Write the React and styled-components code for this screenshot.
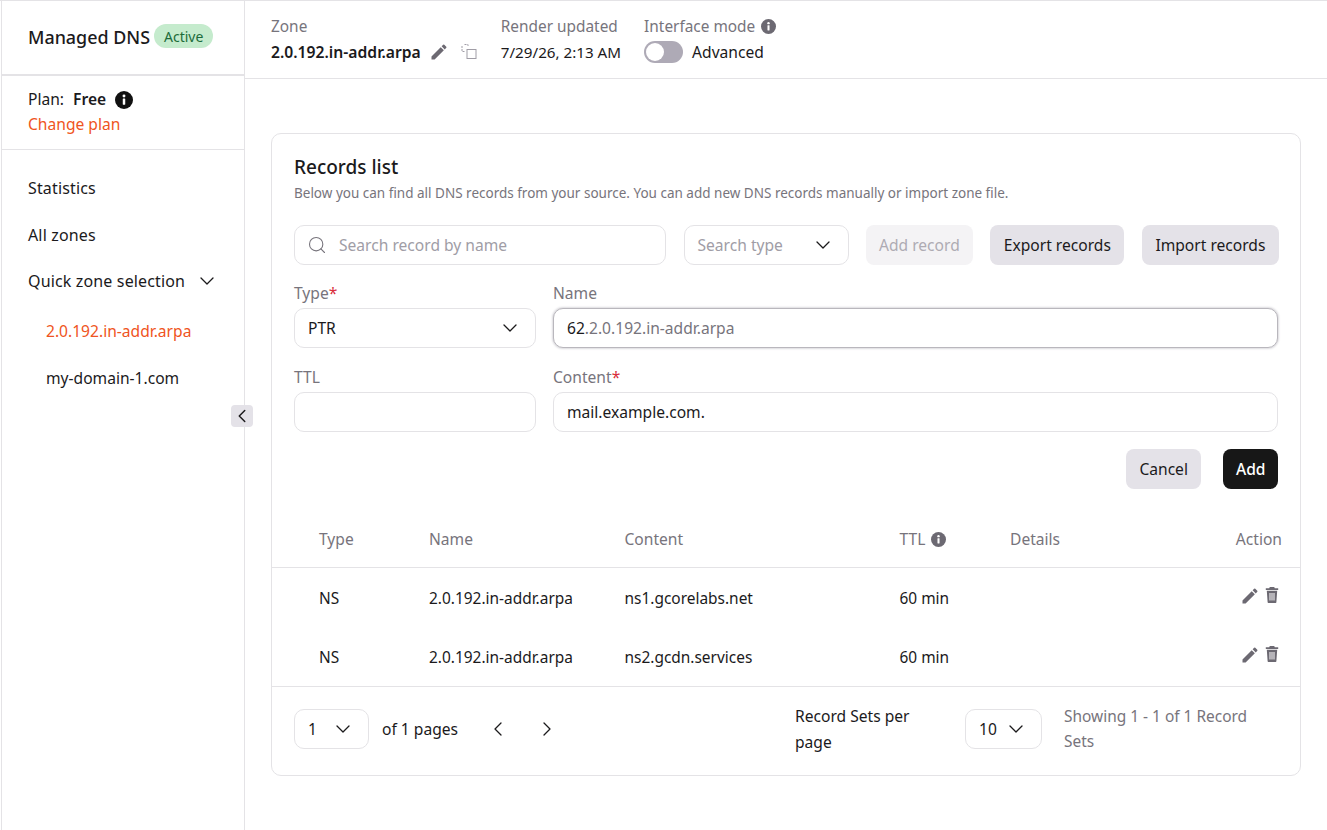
import React from 'react';
import styled, {createGlobalStyle} from 'styled-components';
import {ChevronDown, ChevronLeft, ChevronRight, Search} from 'lucide-react';

const GlobalStyle = createGlobalStyle`
    html, body {
        margin: 0;
        padding: 0;
        background: #fff;
        font-family: "Noto Sans", "Open Sans", sans-serif;
        font-size: 15.6px;
        color: #1b1a1c;
    }
    * {
        box-sizing: border-box;
    }
`

const Page = styled.div`
    display: flex;
    width: 1327px;
    height: 830px;
    border-top: 1px solid #e4e3e6;
    overflow: hidden;
`

const Sidebar = styled.aside`
    position: relative;
    width: 244px;
    flex: none;
    margin-left: 1px;
    border-left: 1px solid #e4e3e6;
    border-right: 1px solid #e4e3e6;
`

const SideHeader = styled.div`
    display: flex;
    align-items: center;
    gap: 4px;
    height: 75px;
    padding: 0 0 2px 26px;
    border-bottom: 2px solid #e4e3e6;
`

const Brand = styled.span`
    font-size: 17.9px;
    font-weight: 500;
`

const Badge = styled.span`
    display: inline-flex;
    align-items: center;
    height: 24px;
    padding: 0 10px;
    border-radius: 12px;
    background: #c5ebcd;
    color: #1c6b3a;
    font-size: 14px;
    margin-top: -1px;
`

const PlanBlock = styled.div`
    height: 74px;
    padding: 11px 0 0 26px;
    border-bottom: 1px solid #e4e3e6;
    line-height: 25px;
`

const PlanRow = styled.div`
    display: flex;
    align-items: center;
    gap: 9px;
    strong {
        font-weight: 600;
    }
`

const OrangeLink = styled.a`
    color: #ef5422;
    display: block;
`

const Nav = styled.nav`
    display: flex;
    flex-direction: column;
    padding-top: 15px;
`

const NavItem = styled.a`
    display: flex;
    align-items: center;
    gap: 10px;
    height: 46.5px;
    padding-left: 26px;
    font-size: 16px;
    letter-spacing: .15px;
`

const SubList = styled.div`
    display: flex;
    flex-direction: column;
    padding-top: 3px;
`

const SubItem = styled.a`
    display: flex;
    align-items: center;
    height: 47px;
    padding-left: 44px;
    color: ${p => p.$active ? '#ef5422' : '#1b1a1c'};
`

const Collapse = styled.button`
    position: absolute;
    right: -9px;
    top: 404px;
    width: 22px;
    height: 22px;
    padding: 0;
    border: 0;
    border-radius: 4px;
    background: #e4e2e8;
    color: #1b1a1c;
    display: flex;
    align-items: center;
    justify-content: center;
`

const Main = styled.main`
    flex: 1;
    min-width: 0;
`

const TopBar = styled.header`
    display: flex;
    height: 78px;
    padding: 14px 0 0 26px;
    border-bottom: 1px solid #e4e3e6;
`

const TopGroup = styled.div`
    margin-right: ${p => p.$gap || 0}px;
`

const TopLabel = styled.div`
    display: flex;
    align-items: center;
    gap: 6px;
    height: 23px;
    color: #77747c;
    font-size: 15.4px;
`

const TopValue = styled.div`
    display: flex;
    align-items: center;
    height: 27px;
    font-size: ${p => p.$size || 15.6}px;
    font-weight: ${p => p.$bold ? 600 : 400};
    white-space: nowrap;
`

const ZoneTools = styled.span`
    display: flex;
    align-items: center;
    gap: 12px;
    margin-left: 8px;
`

const Toggle = styled.span`
    position: relative;
    display: inline-block;
    width: 39px;
    height: 22px;
    border-radius: 11px;
    background: #aeaab6;
    margin-right: 9px;
    &::after {
        content: "";
        position: absolute;
        left: 2px;
        top: 2px;
        width: 18px;
        height: 18px;
        border-radius: 50%;
        background: #fff;
    }
`

const Card = styled.section`
    width: 1030px;
    height: 643px;
    margin: 54px 0 0 26px;
    border: 1px solid #e4e3e6;
    border-radius: 10px;
`

const CardHead = styled.div`
    padding: 20px 22px 0;
    height: 91px;
    h2 {
        margin: 0;
        font-size: 19px;
        line-height: 26px;
        font-weight: 500;
    }
    p {
        margin: 4px 0 0;
        font-size: 13.5px;
        line-height: 18px;
        color: #77747c;
    }
`

const Toolbar = styled.div`
    display: flex;
    padding: 0 22px;
    gap: 17.5px;
`

const Field = styled.div`
    display: flex;
    align-items: center;
    justify-content: ${p => p.$start ? 'flex-start' : 'space-between'};
    flex: ${p => p.$width ? 'none' : '1 0 auto'};
    width: ${p => p.$width ? `${p.$width}px` : 'auto'};
    height: 40px;
    padding: 0 13px;
    background: #fff;
    border: 1px solid ${p => p.$focus ? '#b9b7bd' : '#e4e3e6'};
    border-radius: 10px;
    box-shadow: ${p => p.$focus ? '0 0 2px 1px #dcdbdf' : 'none'};
    color: ${p => p.$muted ? '#a09da6' : '#1b1a1c'};
    white-space: nowrap;
`

const SearchField = styled(Field)`
    justify-content: flex-start;
    gap: 12px;
    padding-left: 12px;
`

const Btn = styled.button`
    height: 40px;
    padding: 0 ${p => p.$pad || 13}px;
    border: 0;
    border-radius: 8px;
    font-family: inherit;
    font-size: 15.6px;
    background: ${p => p.$dark ? '#171717' : p.$off ? '#f4f3f5' : '#e4e2e8'};
    color: ${p => p.$dark ? '#fff' : p.$off ? '#aeabb3' : '#1b1a1c'};
    font-weight: ${p => p.$dark ? 500 : 400};
    white-space: nowrap;
`

const FormGrid = styled.div`
    display: grid;
    grid-template-columns: 242px 1fr;
    column-gap: 17px;
    row-gap: 18px;
    padding: 17px 22px 0;
`

const FormCell = styled.div`
    display: flex;
    flex-direction: column;
`

const Label = styled.label`
    height: 26px;
    line-height: 22px;
    color: #77747c;
    em {
        color: #d92d3a;
        font-style: normal;
    }
`

const FormActions = styled.div`
    display: flex;
    justify-content: flex-end;
    gap: 22px;
    padding: 17px 22px 0;
`

const NameTail = styled.span`
    color: #77747c;
`

const Row = styled.div`
    display: grid;
    grid-template-columns: 110px 195.5px 275px 110.5px 1fr auto;
    align-items: center;
    height: ${p => p.$h}px;
    padding: ${p => p.$head ? '22px 18px 0 47px' : '0 19px 0 47px'};
    font-size: ${p => p.$head ? 15.6 : 15.45}px;
    color: ${p => p.$head ? '#77747c' : '#1b1a1c'};
    border-bottom: ${p => p.$line ? '1px solid #e4e3e6' : 'none'};
`

const HeadCell = styled.span`
    display: inline-flex;
    align-items: center;
    gap: 6px;
`

const Actions = styled.span`
    display: flex;
    align-items: flex-start;
    gap: 3px;
    margin-top: -5px;
`

const Footer = styled.div`
    display: flex;
    align-items: center;
    height: 84px;
    padding: 0 22px;
`

const PagesText = styled.span`
    margin-left: 13px;
`

const PerPage = styled.span`
    width: 170px;
    margin-left: 236px;
    padding-right: 30px;
    line-height: 26px;
`

const Showing = styled.span`
    width: 200px;
    margin-left: 22px;
    font-size: 15.45px;
    color: #77747c;
    line-height: 25px;
`

const Pager = styled.button`
    display: flex;
    padding: 0;
    border: 0;
    background: none;
    color: #1b1a1c;
    margin-left: ${p => p.$gap}px;
`

const InfoIcon = ({size, color}) => (
    <svg width={size} height={size} viewBox="0 0 16 16">
        <circle cx="8" cy="8" r="8" fill={color} />
        <circle cx="8" cy="4.4" r="1.3" fill="#fff" />
        <rect x="6.9" y="6.6" width="2.2" height="5.6" rx=".4" fill="#fff" />
    </svg>
)

const PencilIcon = () => (
    <svg width="20" height="20" viewBox="0 0 24 24" fill="#6c6972">
        <path d="M3 17.25V21h3.75L17.81 9.94l-3.75-3.75L3 17.25zM20.71 7.04a1 1 0 0 0 0-1.41l-2.34-2.34a1 1 0 0 0-1.41 0l-1.83 1.83 3.75 3.75 1.83-1.83z" />
    </svg>
)

const TrashIcon = () => (
    <svg width="18" height="18" viewBox="0 0 18 18" fill="#6c6972">
        <path d="M6.8 1h4.4l.6 1.3h3.4v1.6H2.8V2.3h3.4L6.8 1z" />
        <path fillRule="evenodd" d="M3.8 4.8h10.4l-.8 11.2c0 .6-.5 1-1 1H5.6c-.5 0-1-.4-1-1L3.8 4.8zM6.5 7v7.6h1V7h-1zm2 0v7.6h1V7h-1zm2 0v7.6h1V7h-1z" />
    </svg>
)

const CopyIcon = () => (
    <svg width="16" height="16" viewBox="0 0 16 16" fill="none" stroke="#a09da6" strokeWidth="1">
        <rect x="6" y="5.5" width="9" height="9" />
        <path d="M3.500 .5h3.500v2.500M1 2v5.500h2.500" strokeDasharray="2 1" />
    </svg>
)

const Chevron = () => <ChevronDown size={24} strokeWidth={1.3} color="#1b1a1c" />

const records = [
    {type: 'NS', name: '2.0.192.in-addr.arpa', content: 'ns1.gcorelabs.net', ttl: '60 min'},
    {type: 'NS', name: '2.0.192.in-addr.arpa', content: 'ns2.gcdn.services', ttl: '60 min'},
]

export default function App() {
    return (
        <Page>
            <GlobalStyle />
            <Sidebar>
                <SideHeader>
                    <Brand>Managed DNS</Brand>
                    <Badge>Active</Badge>
                </SideHeader>
                <PlanBlock>
                    <PlanRow>
                        <span>Plan:</span>
                        <strong>Free</strong>
                        <InfoIcon size={18} color="#111" />
                    </PlanRow>
                    <OrangeLink>Change plan</OrangeLink>
                </PlanBlock>
                <Nav>
                    <NavItem>Statistics</NavItem>
                    <NavItem>All zones</NavItem>
                    <NavItem>Quick zone selection <Chevron /></NavItem>
                    <SubList>
                        <SubItem $active>2.0.192.in-addr.arpa</SubItem>
                        <SubItem>my-domain-1.com</SubItem>
                    </SubList>
                </Nav>
                <Collapse><ChevronLeft size={22} strokeWidth={1.6} /></Collapse>
            </Sidebar>
            <Main>
                <TopBar>
                    <TopGroup $gap={24}>
                        <TopLabel>Zone</TopLabel>
                        <TopValue $bold $size={15.7}>
                            2.0.192.in-addr.arpa
                            <ZoneTools><PencilIcon /><CopyIcon /></ZoneTools>
                        </TopValue>
                    </TopGroup>
                    <TopGroup $gap={23}>
                        <TopLabel>Render updated</TopLabel>
                        <TopValue $size={15.2}>7/29/26, 2:13 AM</TopValue>
                    </TopGroup>
                    <TopGroup>
                        <TopLabel>Interface mode <InfoIcon size={15} color="#6c6972" /></TopLabel>
                        <TopValue><Toggle />Advanced</TopValue>
                    </TopGroup>
                </TopBar>
                <Card>
                    <CardHead>
                        <h2>Records list</h2>
                        <p>Below you can find all DNS records from your source. You can add new DNS records manually or import zone file.</p>
                    </CardHead>
                    <Toolbar>
                        <SearchField $width={372} $muted><Search size={20} strokeWidth={1.3} color="#77747c" />Search record by name</SearchField>
                        <Field $width={165} $muted>Search type <Chevron /></Field>
                        <Btn $off>Add record</Btn>
                        <Btn $pad={13.5}>Export records</Btn>
                        <Btn $pad={13.5}>Import records</Btn>
                    </Toolbar>
                    <FormGrid>
                        <FormCell>
                            <Label>Type<em>*</em></Label>
                            <Field>PTR <Chevron /></Field>
                        </FormCell>
                        <FormCell>
                            <Label>Name</Label>
                            <Field $focus $start><span>62</span><NameTail>.2.0.192.in-addr.arpa</NameTail></Field>
                        </FormCell>
                        <FormCell>
                            <Label>TTL</Label>
                            <Field />
                        </FormCell>
                        <FormCell>
                            <Label>Content<em>*</em></Label>
                            <Field>mail.example.com.</Field>
                        </FormCell>
                    </FormGrid>
                    <FormActions>
                        <Btn $pad={13.5}>Cancel</Btn>
                        <Btn $dark $pad={12.5}>Add</Btn>
                    </FormActions>
                    <Row $head $line $h={79}>
                        <span>Type</span>
                        <span>Name</span>
                        <span>Content</span>
                        <HeadCell>TTL <InfoIcon size={15} color="#6c6972" /></HeadCell>
                        <span>Details</span>
                        <span>Action</span>
                    </Row>
                    {records.map((r, i) => (
                        <Row key={r.content} $h={i ? 59 : 60} $line={i === 1}>
                            <span>{r.type}</span>
                            <span>{r.name}</span>
                            <span>{r.content}</span>
                            <span>{r.ttl}</span>
                            <span />
                            <Actions><PencilIcon /><TrashIcon /></Actions>
                        </Row>
                    ))}
                    <Footer>
                        <Field $width={75}>1 <Chevron /></Field>
                        <PagesText>of 1 pages</PagesText>
                        <Pager $gap={28}><ChevronLeft size={24} strokeWidth={1.3} /></Pager>
                        <Pager $gap={25}><ChevronRight size={24} strokeWidth={1.3} /></Pager>
                        <PerPage>Record Sets per page</PerPage>
                        <Field $width={77}>10 <Chevron /></Field>
                        <Showing>Showing 1 - 1 of 1 Record Sets</Showing>
                    </Footer>
                </Card>
            </Main>
        </Page>
    );
}
